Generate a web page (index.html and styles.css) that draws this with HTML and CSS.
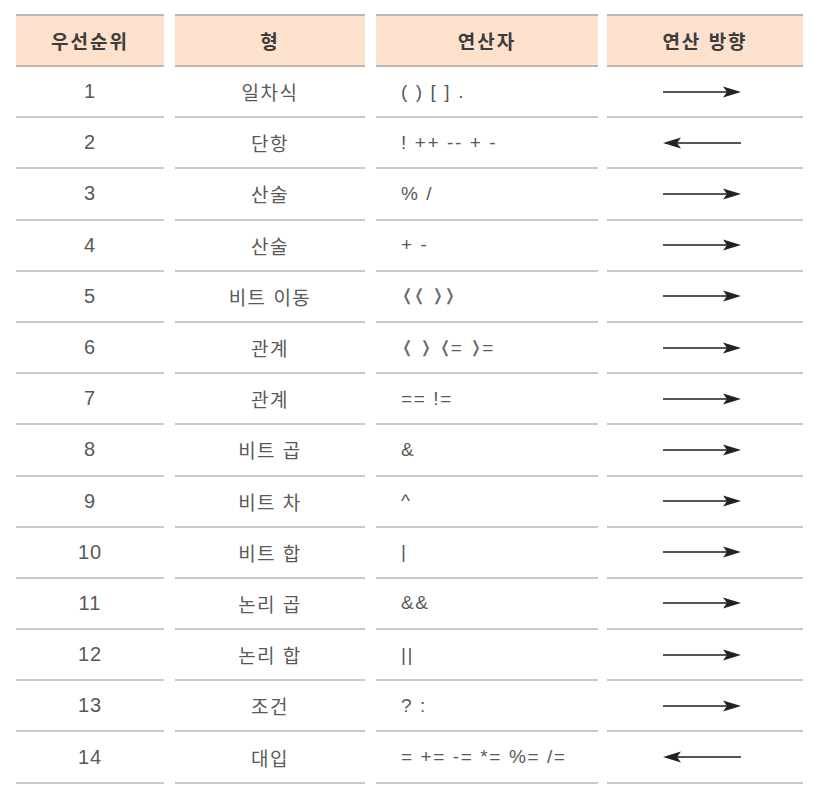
FILE: index.html
```html
<!DOCTYPE html>
<html lang="ko">
<head>
<meta charset="utf-8">
<link rel="stylesheet" href="styles.css">
</head>
<body>
<svg class="defs" width="0" height="0" aria-hidden="true">
  <defs>
    <symbol id="arr-r" viewBox="0 0 80 12">
      <line x1="1" y1="6" x2="68" y2="6" stroke="#555" stroke-width="2"/>
      <path d="M61 0.5 L79 6 L61 11.5 L65 6 Z" fill="#222"/>
    </symbol>
    <symbol id="arr-l" viewBox="0 0 80 12">
      <line x1="12" y1="6" x2="79" y2="6" stroke="#555" stroke-width="2"/>
      <path d="M19 0.5 L1 6 L19 11.5 L15 6 Z" fill="#222"/>
    </symbol>
  </defs>
</svg>
<div class="table">
  <div class="th">우선순위</div><div class="th">형</div><div class="th">연산자</div><div class="th">연산 방향</div>

  <div class="td c num">1</div><div class="td c">일차식</div><div class="td op"><span>( ) [ ] .</span></div><div class="td c"><svg class="arrow"><use href="#arr-r"/></svg></div>
  <div class="td c num">2</div><div class="td c">단항</div><div class="td op"><span>! ++ -- + -</span></div><div class="td c"><svg class="arrow"><use href="#arr-l"/></svg></div>
  <div class="td c num">3</div><div class="td c">산술</div><div class="td op"><span>% /</span></div><div class="td c"><svg class="arrow"><use href="#arr-r"/></svg></div>
  <div class="td c num">4</div><div class="td c">산술</div><div class="td op"><span>+ -</span></div><div class="td c"><svg class="arrow"><use href="#arr-r"/></svg></div>
  <div class="td c num">5</div><div class="td c">비트 이동</div><div class="td op"><span><span class="ang">⟨</span><span class="ang">⟨</span> <span class="ang">⟩</span><span class="ang">⟩</span></span></div><div class="td c"><svg class="arrow"><use href="#arr-r"/></svg></div>
  <div class="td c num">6</div><div class="td c">관계</div><div class="td op"><span><span class="ang">⟨</span> <span class="ang">⟩</span> <span class="ang">⟨</span>= <span class="ang">⟩</span>=</span></div><div class="td c"><svg class="arrow"><use href="#arr-r"/></svg></div>
  <div class="td c num">7</div><div class="td c">관계</div><div class="td op"><span>== !=</span></div><div class="td c"><svg class="arrow"><use href="#arr-r"/></svg></div>
  <div class="td c num">8</div><div class="td c">비트 곱</div><div class="td op"><span>&amp;</span></div><div class="td c"><svg class="arrow"><use href="#arr-r"/></svg></div>
  <div class="td c num">9</div><div class="td c">비트 차</div><div class="td op"><span>^</span></div><div class="td c"><svg class="arrow"><use href="#arr-r"/></svg></div>
  <div class="td c num">10</div><div class="td c">비트 합</div><div class="td op"><span>|</span></div><div class="td c"><svg class="arrow"><use href="#arr-r"/></svg></div>
  <div class="td c num">11</div><div class="td c">논리 곱</div><div class="td op"><span>&amp;&amp;</span></div><div class="td c"><svg class="arrow"><use href="#arr-r"/></svg></div>
  <div class="td c num">12</div><div class="td c">논리 합</div><div class="td op"><span>||</span></div><div class="td c"><svg class="arrow"><use href="#arr-r"/></svg></div>
  <div class="td c num">13</div><div class="td c">조건</div><div class="td op"><span>? :</span></div><div class="td c"><svg class="arrow"><use href="#arr-r"/></svg></div>
  <div class="td c num">14</div><div class="td c">대입</div><div class="td op"><span>= += -= *= %= /=</span></div><div class="td c"><svg class="arrow"><use href="#arr-l"/></svg></div>
</div>
</body>
</html>
```
FILE: styles.css
```css
html, body {
  margin: 0;
  padding: 0;
  background: #fff;
}
body {
  font-family: "Liberation Sans", "Noto Sans CJK KR", sans-serif;
  color: #595959;
}
.defs {
  position: absolute;
  width: 0;
  height: 0;
}
.table {
  display: grid;
  grid-template-columns: 148px 190px 220px 196px;
  column-gap: 11px;
  padding: 14px 0 0 16px;
}
.table > div:nth-child(4n+3) {
  margin-right: -2px;
}
.th {
  height: 49px;
  display: flex;
  align-items: center;
  justify-content: center;
  background: #fde1cd;
  border-top: 2px solid #bdb5ae;
  border-bottom: 2px solid #bdb5ae;
  font-weight: bold;
  font-size: 19px;
  letter-spacing: 2px;
  color: #3c3c3c;
}
.td {
  height: 49.2px;
  display: flex;
  align-items: center;
  border-bottom: 2px solid #c9c9c9;
  font-size: 19px;
  letter-spacing: 1.5px;
}
.num {
  font-size: 20px;
  letter-spacing: 1px;
}
.c {
  justify-content: center;
}
.op {
  padding-left: 25px;
  letter-spacing: 1.6px;
  white-space: pre;
}
.ang {
  display: inline-block;
  width: 12px;
  text-align: center;
  font-family: "DejaVu Sans", "Noto Sans", sans-serif;
  font-size: 18px;
  letter-spacing: 0;
  color: #6a6a6a;
  transform: scaleX(1.5);
}
.arrow {
  width: 80px;
  height: 12px;
  margin-left: -6px;
}
```
